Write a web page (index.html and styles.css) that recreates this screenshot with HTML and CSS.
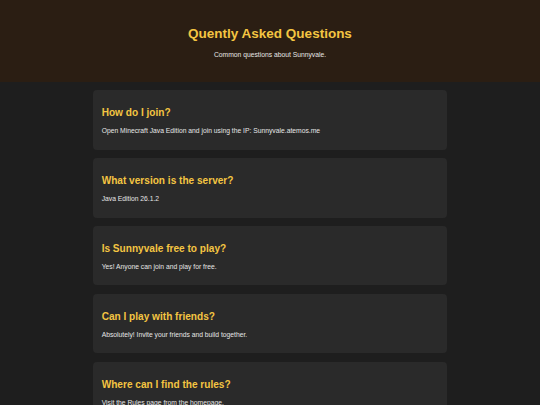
FILE: index.html
```html
<!DOCTYPE html>
<html lang="en">
<head>
<meta charset="utf-8">
<title>FAQ - Sunnyvale</title>
<link rel="stylesheet" href="styles.css">
</head>
<body>
<header class="hero">
  <h1 class="hero-title">Quently Asked Questions</h1>
  <p class="hero-sub">Common questions about Sunnyvale.</p>
</header>
<main class="faq">
  <section class="card">
    <h2 class="q">How do I join?</h2>
    <p class="a">Open Minecraft Java Edition and join using the IP: Sunnyvale.atemos.me</p>
  </section>
  <section class="card">
    <h2 class="q">What version is the server?</h2>
    <p class="a">Java Edition 26.1.2</p>
  </section>
  <section class="card">
    <h2 class="q">Is Sunnyvale free to play?</h2>
    <p class="a">Yes! Anyone can join and play for free.</p>
  </section>
  <section class="card">
    <h2 class="q">Can I play with friends?</h2>
    <p class="a">Absolutely! Invite your friends and build together.</p>
  </section>
  <section class="card">
    <h2 class="q">Where can I find the rules?</h2>
    <p class="a">Visit the Rules page from the homepage.</p>
  </section>
</main>
</body>
</html>
```
FILE: styles.css
```css
html, body {
  margin: 0;
  padding: 0;
}
body {
  background: #1e1e1e;
  color: #e6e6e6;
  font-family: "Liberation Sans", Arial, sans-serif;
  font-size: 6.75px;
  line-height: 7.8px;
}
.hero {
  background: #2b1e13;
  text-align: center;
  padding: 17px 8.4px;
}
.hero-title {
  color: #f4c542;
  font-size: 13.5px;
  line-height: 15.5px;
  font-weight: bold;
  margin: 9px 0;
}
.hero-sub {
  margin: 6.75px 0;
  color: #e6e6e6;
}
.faq {
  width: 353.6px;
  margin: 8px auto 0;
  display: flex;
  flex-direction: column;
  gap: 8.4px;
}
.card {
  background: #2a2a2a;
  border-radius: 4px;
  padding: 8.44px 8.44px 8.2px;
}
.q {
  color: #f4c542;
  font-size: 10.1px;
  line-height: 11.6px;
  font-weight: bold;
  margin: 8.4px 0 8.4px;
}
.a {
  margin: 0 0 6.75px;
}
```
